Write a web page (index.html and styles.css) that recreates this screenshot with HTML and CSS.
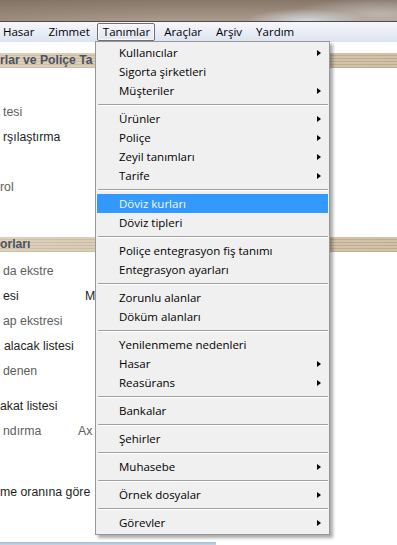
FILE: index.html
```html
<!DOCTYPE html>
<html lang="tr">
<head>
<meta charset="utf-8">
<title>Tanımlar</title>
<link rel="stylesheet" href="styles.css">
</head>
<body>
  <div class="titlebar"></div>
  <nav class="menubar">
    <span class="mb-item first">Hasar</span>
    <span class="mb-item">Zimmet</span>
    <span class="mb-item open">Tanımlar</span>
    <span class="mb-item">Araçlar</span>
    <span class="mb-item">Arşiv</span>
    <span class="mb-item">Yardım</span>
  </nav>

  <main class="content">
    <div class="section-head first-head">rlar ve Poliçe Ta</div>
    <div class="group">
      <div class="row"></div>
      <div class="row gray">tesi</div>
      <div class="row">rşılaştırma</div>
      <div class="row"></div>
      <div class="row gray flush">rol</div>
      <div class="row"></div>
    </div>

    <div class="section-head">orları</div>
    <div class="group">
      <div class="row gray">da ekstre</div>
      <div class="row"><span class="lbl w-m">esi</span><span>M</span></div>
      <div class="row gray">ap ekstresi</div>
      <div class="row indent">alacak listesi</div>
      <div class="row gray">denen</div>
    </div>

    <div class="group group-3">
      <div class="row flush">akat listesi</div>
      <div class="row gray"><span class="lbl w-ax">ndırma</span><span>Ax</span></div>
      <div class="row flush late">me oranına göre</div>
    </div>
  </main>

  <div class="statusbar"></div>

  <div class="dropdown">
    <div class="mi sub">Kullanıcılar</div>
    <div class="mi">Sigorta şirketleri</div>
    <div class="mi sub">Müşteriler</div>
    <div class="sep"></div>
    <div class="mi sub">Ürünler</div>
    <div class="mi sub">Poliçe</div>
    <div class="mi sub">Zeyil tanımları</div>
    <div class="mi sub">Tarife</div>
    <div class="sep"></div>
    <div class="mi hl">Döviz kurları</div>
    <div class="mi">Döviz tipleri</div>
    <div class="sep"></div>
    <div class="mi">Poliçe entegrasyon fiş tanımı</div>
    <div class="mi">Entegrasyon ayarları</div>
    <div class="sep"></div>
    <div class="mi">Zorunlu alanlar</div>
    <div class="mi">Döküm alanları</div>
    <div class="sep"></div>
    <div class="mi">Yenilenmeme nedenleri</div>
    <div class="mi sub">Hasar</div>
    <div class="mi sub">Reasürans</div>
    <div class="sep"></div>
    <div class="mi">Bankalar</div>
    <div class="sep"></div>
    <div class="mi">Şehirler</div>
    <div class="sep"></div>
    <div class="mi sub">Muhasebe</div>
    <div class="sep"></div>
    <div class="mi sub">Örnek dosyalar</div>
    <div class="sep"></div>
    <div class="mi sub">Görevler</div>
  </div>
</body>
</html>
```

FILE: styles.css
```css
* {
  box-sizing: border-box;
  margin: 0;
  padding: 0;
}

html, body {
  width: 397px;
  height: 545px;
  overflow: hidden;
  background: #ffffff;
}

body {
  position: relative;
  display: flex;
  flex-direction: column;
  font-family: "Liberation Sans", Arial, sans-serif;
}

/* blurred aero title strip */
.titlebar {
  height: 22px;
  flex: none;
  border-bottom: 1px solid #4e4a48;
  background:
    radial-gradient(ellipse 60px 12px at 305px 21px, rgba(214, 222, 232, 0.9), rgba(214, 222, 232, 0)),
    radial-gradient(ellipse 90px 16px at 380px 14px, rgba(200, 196, 192, 0.7), rgba(200, 196, 192, 0)),
    linear-gradient(to right, rgba(120, 104, 92, 0.25), rgba(0, 0, 0, 0) 40%),
    linear-gradient(#877769, #ab9b8c);
}

/* menu bar */
.menubar {
  height: 20px;
  flex: none;
  display: flex;
  align-items: center;
  background: linear-gradient(#f6f7fb, #e9edf6 50%, #dce3f0);
  font-family: "Open Sans", "Noto Sans", sans-serif;
  font-size: 11.5px;
  color: #000;
}

.mb-item {
  height: 18px;
  line-height: 16px;
  padding: 0 6px;
  border: 1px solid transparent;
  border-radius: 2px;
  white-space: nowrap;
}

.mb-item.first {
  margin-left: -4px;
}

.mb-item.open {
  border-color: #6f6f72;
  background: linear-gradient(#f4f6fa, #e2e7f0);
  box-shadow: inset 0 0 0 1px rgba(255, 255, 255, 0.7);
  padding: 0 4px 0 5px;
  margin-right: 2px;
}

/* left content (partially hidden by the menu) */
.content {
  flex: 1;
  display: flex;
  flex-direction: column;
  font-size: 12.3px;
  color: #1e1e1e;
}

.section-head {
  height: 15px;
  line-height: 15px;
  margin-top: 13px;
  font-weight: bold;
  font-size: 12.2px;
  color: #4c5263;
  white-space: nowrap;
  background:
    linear-gradient(to right, rgba(230, 220, 205, 0.35), rgba(160, 140, 110, 0.15)),
    repeating-linear-gradient(to bottom, #d9cbb2 0, #d9cbb2 2px, #c3b193 2px, #c3b193 3px);
}

.section-head.first-head {
  margin-top: 11px;
}

.group {
  margin-top: 6px;
  display: flex;
  flex-direction: column;
}

.group-3 {
  margin-top: 10px;
}

.row {
  height: 25px;
  display: flex;
  align-items: center;
  padding-left: 3px;
  white-space: nowrap;
}

.row.gray {
  color: #5e5e5e;
}

.row.flush {
  padding-left: 0;
}

.row.indent {
  padding-left: 4px;
}

.row.late {
  margin-top: 36px;
}

.lbl.w-m {
  width: 82px;
}

.lbl.w-ax {
  width: 75px;
}

.statusbar {
  flex: none;
  width: 216px;
  height: 3px;
  background: linear-gradient(#a9bad0, #c8d5e5);
}

/* dropdown menu overlay */
.dropdown {
  position: absolute;
  top: 41px;
  left: 95px;
  width: 235px;
  padding: 1px 0 2px;
  background: #f0f0f0;
  border: 1px solid #979797;
  box-shadow: 3px 3px 3px rgba(0, 0, 0, 0.33);
  font-family: "Open Sans", "Noto Sans", sans-serif;
  font-size: 11.5px;
  color: #000;
}

.mi {
  height: 19px;
  line-height: 19px;
  margin: 0 1px;
  padding-left: 22px;
  display: flex;
  align-items: center;
  white-space: nowrap;
}

.mi.sub::after {
  content: "";
  margin-left: auto;
  margin-right: 7px;
  width: 0;
  height: 0;
  border-left: 4px solid #000;
  border-top: 3.5px solid transparent;
  border-bottom: 3.5px solid transparent;
}

.mi.hl {
  background: #3399ff;
  color: #f4f8ff;
}

.sep {
  height: 2px;
  margin: 4px 1px 3px 2px;
  border-top: 1px solid #a0a0a0;
  border-bottom: 1px solid #ffffff;
}
```
